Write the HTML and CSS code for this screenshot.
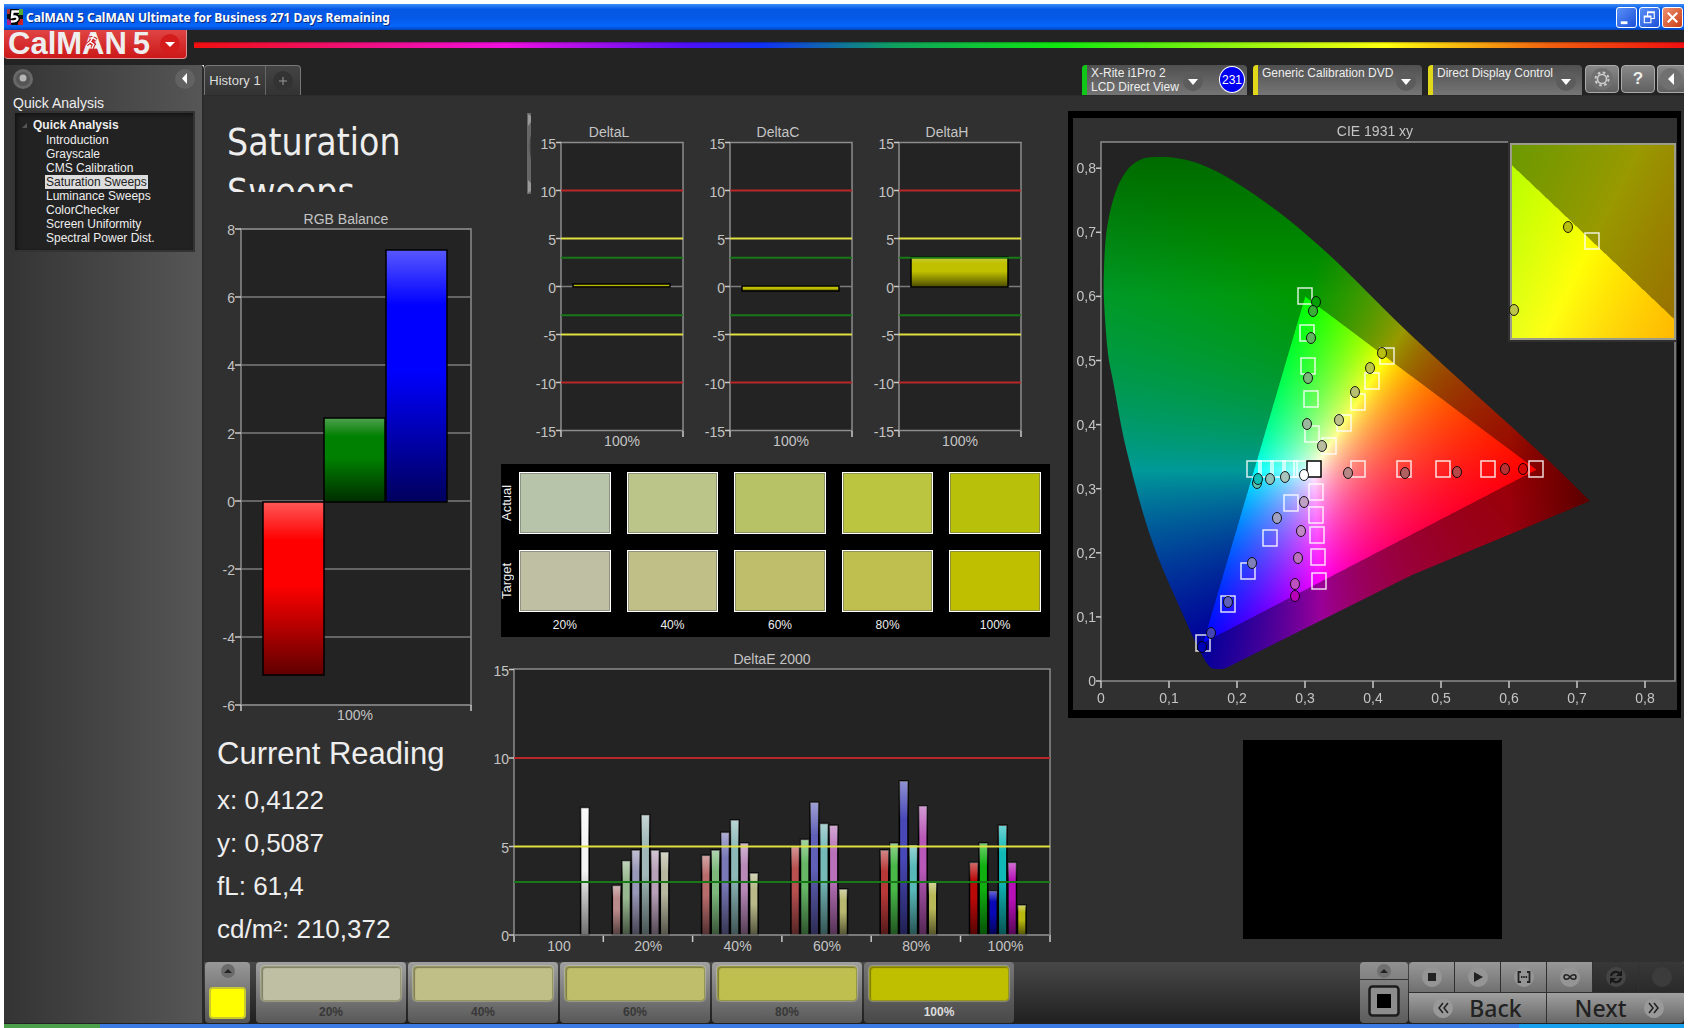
FILE: index.html
```html
<!DOCTYPE html>
<html lang="en">
<head>
<meta charset="utf-8">
<title>CalMAN 5</title>
<link rel="stylesheet" href="styles.css">
</head>
<body>
<div class="window">
  <header class="titlebar">
    <svg class="app-icon" viewBox="0 0 16 16" aria-hidden="true"><rect width="16" height="16" fill="#111"/><path d="M0 0h5v5H0z" fill="#a33"/><path d="M11 0h5v6h-5z" fill="#5a3"/><path d="M0 10h4v6H0z" fill="#a28"/><path d="M11 10h5v6h-5z" fill="#c22"/><path d="M12 2.500H5.500L5 8q5-1.500 5.500 1.500T4 12.500" fill="none" stroke="#000" stroke-width="5"/><path d="M12 2.500H5.500L5 8q5-1.500 5.500 1.500T4 12.500" fill="none" stroke="#fff" stroke-width="2.400"/></svg>
    <span class="title-text">CalMAN 5 CalMAN Ultimate for Business 271 Days Remaining</span>
    <button class="win-btn" aria-label="Minimize"><svg viewBox="0 0 20 20"><path d="M4 14h7v3H4z" fill="#fff"/></svg></button>
    <button class="win-btn" aria-label="Restore"><svg viewBox="0 0 20 20"><path d="M8 8V4h7v7h-3M8 5h7M4.500 8.500h7v7h-7zM4.500 9.500h7" fill="none" stroke="#fff" stroke-width="1.200"/></svg></button>
    <button class="win-btn close" aria-label="Close"><svg viewBox="0 0 20 20"><path d="M5 5l10 10M15 5L5 15" stroke="#fff" stroke-width="2.200"/></svg></button>
  </header>

  <div class="brandbar">
    <button class="logo"><span>CalMAN</span><span>5</span>
      <svg class="logo-arrow" viewBox="0 0 22 22" aria-hidden="true"><circle cx="11" cy="11" r="10" fill="#d41c1c"/><path d="M6 9h10l-5 5z" fill="#fff"/></svg>
      <svg class="logo-man" viewBox="0 0 14 18" aria-hidden="true"><path d="M8 5L5 10l4 3-2 4M5 10l-4 3M8 5l4 3M8 5L4 6" fill="none" stroke="#c22" stroke-width="4"/><path d="M8 5L5 10l4 3-2 4M5 10l-4 3M8 5l4 3M8 5L4 6" fill="none" stroke="#fff" stroke-width="1.500"/><circle cx="9" cy="2.500" r="1.800" fill="#fff"/></svg>
    </button>
    <div class="spectrum"></div>
  </div>

  <div class="workspace">
    <aside class="sidebar">
      <div class="side-tools">
        <button class="round" aria-label="Pin"><svg viewBox="0 0 20 20"><circle cx="10" cy="10" r="10" fill="#686868"/><circle cx="10" cy="10" r="7" fill="#555"/><circle cx="10" cy="9" r="3.500" fill="#b5b5b5"/></svg></button>
        <button class="round" aria-label="Collapse"><svg viewBox="0 0 20 20"><circle cx="10" cy="10" r="10" fill="#626262"/><path d="M12 4v11L7 9.500z" fill="#fff"/></svg></button>
      </div>
      <h2 class="side-title">Quick Analysis</h2>
      <nav class="tree">
        <div class="tree-root"><svg viewBox="0 0 6 6" aria-hidden="true"><path d="M6 0v6H0z" fill="#555"/></svg>Quick Analysis</div>
        <a href="#intro">Introduction</a>
        <a href="#gray">Grayscale</a>
        <a href="#cms">CMS Calibration</a>
        <a href="#sat" class="current">Saturation Sweeps</a>
        <a href="#lum">Luminance Sweeps</a>
        <a href="#checker">ColorChecker</a>
        <a href="#uniformity">Screen Uniformity</a>
        <a href="#spectral">Spectral Power Dist.</a>
      </nav>
    </aside>

    <div class="main">
      <div class="tabs">
        <div class="history"><button class="tab">History 1</button><button class="tab-add" aria-label="Add history"><svg viewBox="0 0 20 20"><circle cx="10" cy="10" r="10" fill="#333"/><path d="M6 10h8M10 6v8" stroke="#999"/></svg></button></div>
        <div class="devices">
          <div class="device wide"><i class="led green"></i><span>X-Rite i1Pro 2<br>LCD Direct View</span><button class="drop" aria-label="Meter menu"><svg viewBox="0 0 20 20"><circle cx="10" cy="10" r="10" fill="#5c5c5c"/><path d="M5 8h10l-5 6z" fill="#fff"/></svg></button><button class="count">231</button></div>
          <div class="device source"><i class="led"></i><span>Generic Calibration DVD</span><button class="drop" aria-label="Source menu"><svg viewBox="0 0 20 20"><circle cx="10" cy="10" r="10" fill="#5c5c5c"/><path d="M5 8h10l-5 6z" fill="#fff"/></svg></button></div>
          <div class="device display"><i class="led"></i><span>Direct Display Control</span><button class="drop" aria-label="Display menu"><svg viewBox="0 0 20 20"><circle cx="10" cy="10" r="10" fill="#5c5c5c"/><path d="M5 8h10l-5 6z" fill="#fff"/></svg></button></div>
          <button class="tool" aria-label="Settings"><svg viewBox="0 0 24 24"><circle cx="12" cy="12" r="11" fill="#707070"/><circle cx="12" cy="12" r="4.500" fill="none" stroke="#ccc" stroke-width="1.600"/><circle cx="12" cy="12" r="6.500" fill="none" stroke="#ccc" stroke-width="2" stroke-dasharray="2.600 2.500"/></svg></button>
          <button class="tool help">?</button>
          <button class="tool last" aria-label="Collapse"><svg viewBox="0 0 24 24"><circle cx="12" cy="12" r="11" fill="#707070"/><path d="M15 6v12l-6-6z" fill="#fff"/></svg></button>
        </div>
      </div>

      <main class="content">
        <section class="col-left">
          <h1>Saturation Sweeps</h1>
          <svg id="rgb" class="chart" viewBox="204 200 290 520" role="img" aria-label="RGB Balance"></svg>
          <div class="reading">
            <h2>Current Reading</h2>
            <p>x: 0,4122</p><p>y: 0,5087</p><p>fL: 61,4</p><p>cd/m²: 210,372</p>
          </div>
        </section>
        <section class="col-mid">
          <svg id="delta" class="chart" viewBox="494 100 573 356" role="img" aria-label="DeltaL, DeltaC and DeltaH"></svg>
          <div class="patches">
            <b class="side">Actual</b><i class="a20"></i><i class="a40"></i><i class="a60"></i><i class="a80"></i><i class="a100"></i>
            <b class="side">Target</b><i class="t20"></i><i class="t40"></i><i class="t60"></i><i class="t80"></i><i class="t100"></i>
            <span></span><span>20%</span><span>40%</span><span>60%</span><span>80%</span><span>100%</span>
          </div>
          <svg id="de" class="chart" viewBox="494 645 573 312" role="img" aria-label="DeltaE 2000"></svg>
        </section>
        <section class="col-right">
          <div class="cie"><canvas id="gamut" width="1208" height="1184"></canvas><svg id="cie" class="chart" viewBox="1073 117 604 592" role="img" aria-label="CIE 1931 xy"></svg></div>
          <div class="preview"></div>
        </section>
      </main>

      <footer class="dock">
        <div class="picker"><svg viewBox="0 0 14 14" aria-hidden="true"><circle cx="7" cy="7" r="7" fill="#6a6a6a"/><path d="M3 9h8L7 5z" fill="#222"/></svg><button class="swatch" aria-label="Current color"></button></div>
        <button class="level"><i class="t20"></i>20%</button>
        <button class="level"><i class="t40"></i>40%</button>
        <button class="level"><i class="t60"></i>60%</button>
        <button class="level"><i class="t80"></i>80%</button>
        <button class="level active"><i class="t100"></i>100%</button>
        <div class="controls">
          <div class="screen"><button aria-label="Open pattern window"><svg viewBox="0 0 14 14"><circle cx="7" cy="7" r="7" fill="#6f6f6f"/><path d="M3 9h8L7 5z" fill="#222"/></svg></button><button class="pattern" aria-label="Pattern"><svg viewBox="0 0 32 32"><rect x="1.500" y="1.500" width="29" height="29" rx="3" fill="#8d8d8d" stroke="#1c1c1c" stroke-width="2.500"/><path d="M9 9h14v14H9z" fill="#000"/></svg></button></div>
          <div class="keys">
            <button aria-label="Stop"><svg viewBox="0 0 20 20"><circle cx="10" cy="10" r="10" fill="#959595"/><path d="M6 6h8v8H6z" fill="#222"/></svg></button>
            <button aria-label="Read"><svg viewBox="0 0 20 20"><circle cx="10" cy="10" r="10" fill="#959595"/><path d="M6 5l9 5-9 5z" fill="#222"/></svg></button>
            <button aria-label="Read series"><svg viewBox="0 0 20 20"><circle cx="10" cy="10" r="10" fill="#959595"/><path d="M7 5H4.500v10H7M13 5h2.500v10H13M7 10h1.500M9.300 10h1.500M11.600 10h1.500" fill="none" stroke="#222" stroke-width="1.800"/></svg></button>
            <button aria-label="Read continuous"><svg viewBox="0 0 20 20"><circle cx="10" cy="10" r="10" fill="#959595"/><path d="M10 10c-2-3-6-3-6 0s4 3 6 0 6-3 6 0-4 3-6 0z" fill="none" stroke="#222" stroke-width="1.500"/></svg></button>
            <button class="off" aria-label="Refresh"><svg viewBox="0 0 20 20"><circle cx="10" cy="10" r="10" fill="#444"/><path d="M5 9a5 5 0 0 1 9-2M15 11a5 5 0 0 1-9 2" fill="none" stroke="#171717" stroke-width="2"/><path d="M16 3v6h-6zM4 17v-6h6z" fill="#171717"/></svg></button>
            <button class="off" aria-label="Record"><svg viewBox="0 0 20 20"><circle cx="10" cy="10" r="10" fill="#3c3c3c"/></svg></button>
            <button class="nav"><svg viewBox="0 0 20 20"><circle cx="10" cy="10" r="10" fill="#999"/><path d="M10 5l-4 5 4 5M15 5l-4 5 4 5" fill="none" stroke="#222" stroke-width="1.500"/></svg>Back</button>
            <button class="nav next">Next<svg viewBox="0 0 20 20"><circle cx="10" cy="10" r="10" fill="#999"/><path d="M5 5l4 5-4 5M10 5l4 5-4 5" fill="none" stroke="#222" stroke-width="1.500"/></svg></button>
          </div>
        </div>
      </footer>
    </div>
  </div>
  <div class="taskbar"><i class="start"></i><i class="tray"></i></div>
</div>
<script src="charts.js"></script>
</body>
</html>
```
FILE: charts.js
```js
const rect = (x, y, w, h, cls, extra = '') => `<rect x="${x}" y="${y}" width="${w}" height="${h}" class="${cls}" ${extra}/>`;
const line = (x1, y1, x2, y2, cls) => `<path d="M${x1} ${y1}L${x2} ${y2}" class="${cls}"/>`;
const text = (x, y, s, anchor = 'middle') => `<text x="${x}" y="${y}" text-anchor="${anchor}">${s}</text>`;
const put = (id, html) => { document.getElementById(id).innerHTML = html; };

/* vertical bar shading: light on top, full colour, dark at the foot */
const shade = (id, top, mid, low) => `<linearGradient id="${id}" x1="0" y1="0" x2="0" y2="1"><stop offset="0" stop-color="${top}"/><stop offset=".22" stop-color="${mid}"/><stop offset=".48" stop-color="${mid}"/><stop offset="1" stop-color="${low}"/></linearGradient>`;

/* RGB balance */
{
  const X = 241, R = 471, y = v => 501 - v * 34;
  let s = '<defs>' + shade('r', '#ff5858', '#f00', '#600000') + shade('g', '#4fa04f', '#008000', '#002c00') + shade('b', '#5858ff', '#00f', '#00005c') + '</defs>';
  s += rect(X, y(8), R - X, y(-6) - y(8), 'plot');
  for (let v = 8; v >= -6; v -= 2) s += line(X, y(v), R, y(v), 'grid') + line(X - 6, y(v), X, y(v), 'tick') + text(235, y(v) + 6, v, 'end');
  s += rect(263, 502, 61, 173, 'bar', 'fill="url(#r)"') + rect(324, 418, 61, 84, 'bar', 'fill="url(#g)"') + rect(386, 250, 61, 252, 'bar', 'fill="url(#b)"');
  s += line(X, 705, X, 711, 'tick') + line(R, 705, R, 711, 'tick') + text(346, 224, 'RGB Balance') + text(355, 720, '100%');
  put('rgb', s);
}

/* DeltaL, DeltaC, DeltaH */
{
  const y = v => 286.5 - v * 9.6;
  let s = '<defs>' + shade('y', '#c8cc40', '#c0c000', '#4c4c00') + '</defs>';
  s += '<path d="M527 113h4v81h-4z" fill="#666"/><path d="M528 114l3 2v6l-3 4zM528 180l3 3v8l-3 2z" fill="#999"/><path d="M531 134q-3 12 0 26z" fill="#444"/>';
  [['DeltaL', 284, 3], ['DeltaC', 286, 5], ['DeltaH', 257, 30]].forEach(([name, top, h], i) => {
    const X = 561 + 169 * i, R = X + 122;
    s += rect(X, 142.5, 122, 288, 'plot') + line(X, 286.5, R, 286.5, 'grid');
    for (let v = 15; v >= -15; v -= 5) s += line(X - 5, y(v), X, y(v), 'tick') + text(X - 5, y(v) + 6, v, 'end');
    s += rect(X + 12, top, 97, h, 'bar', 'fill="url(#y)"');
    for (const k of [1, -1]) s += line(X, y(10 * k), R, y(10 * k), 'lim red') + line(X, y(5 * k), R, y(5 * k), 'lim yellow') + line(X, y(3 * k), R, y(3 * k), 'lim green');
    s += line(X, 431, X, 437, 'tick') + line(R, 431, R, 437, 'tick') + text(X + 48, 137, name) + text(X + 61, 446, '100%');
  });
  put('delta', s);
}

/* DeltaE 2000 */
{
  const X = 514, R = 1050, y = v => 935 - v * 17.7;
  const sets = [
    ['100', [0, 0, 0, 0, 0, 0, 7.2], ['', '', '', '', '', '', 'f4f4f4']],
    ['20%', [2.8, 4.2, 4.8, 6.8, 4.8, 4.7], ['b88a8a', '98b890', '9898b8', 'a0b8b8', 'b8a0b8', 'b8b8a0']],
    ['40%', [4.5, 4.8, 5.8, 6.5, 5.2, 3.5], ['b86c6c', '7cb87c', '7878b8', '8cb8b8', 'b888b8', 'b8b888']],
    ['60%', [5, 5.4, 7.5, 6.3, 6.2, 2.6], ['b85050', '66b866', '6060b8', '74b8b8', 'b870b8', 'b8b870']],
    ['80%', [4.8, 5.2, 8.7, 5.1, 7.3, 3], ['b83838', '48b848', '4848b8', '58b8b8', 'b858b8', 'b8b858']],
    ['100%', [4.1, 5.2, 2.5, 6.2, 4.1, 1.7], ['b80808', '10b010', '0808b8', '10b8b8', 'b810b8', 'b8b810']],
  ];
  let s = '<defs><linearGradient id="gloss" x1="0" y1="0" x2="0" y2="1"><stop offset="0" stop-color="#fff" stop-opacity=".4"/><stop offset=".25" stop-color="#fff" stop-opacity="0"/><stop offset=".5" stop-color="#000" stop-opacity="0"/><stop offset="1" stop-color="#000" stop-opacity=".55"/></linearGradient></defs>';
  s += rect(X, 669, R - X, 266, 'plot');
  sets.forEach(([name, vals, cols], i) => {
    const g = X + i * 89.3;
    vals.forEach((v, k) => {
      if (!v) return;
      const x = g + 9 + k * 9.6;
      s += rect(x, y(v), 8.6, 935 - y(v), 'bar', `fill="#${cols[k]}"`) + rect(x, y(v), 8.6, 935 - y(v), '', 'fill="url(#gloss)"');
    });
    s += line(g, 935, g, 942, 'tick') + text(g + 45, 951, name);
  });
  s += line(R, 935, R, 942, 'tick') + line(X, 935, R, 935, 'grid');
  for (const v of [0, 5, 10, 15]) s += line(X - 5, y(v), X, y(v), 'tick') + text(X - 5, y(v) + 6, v, 'end');
  s += line(X, y(10), R, y(10), 'lim red') + line(X, y(5), R, y(5), 'lim yellow') + line(X, y(3), R, y(3), 'lim green') + text(772, 664, 'DeltaE 2000');
  put('de', s);
}

/* CIE 1931 xy: axes, targets (squares) and readings (dots) */
{
  const X = 1101, B = 680, px = v => X + v * 680, py = v => B - v * 641;
  let s = '<path d="M1508 141H1101V680H1675V341" class="frame"/>';
  for (let i = 0; i <= 8; i++) {
    const n = i ? '0,' + i : '0';
    s += line(px(i / 10), B, px(i / 10), B + 7, 'tick') + text(px(i / 10), 702, n);
    s += line(X - 5, py(i / 10), X, py(i / 10), 'tick') + text(X - 5, py(i / 10) + 5, n, 'end');
  }
  s += text(1375, 135, 'CIE 1931 xy') + '<rect x="1511" y="143" width="164" height="195" class="inset"/>';
  const sq = (x, y, c = 'target') => rect(x - 7, y - 8, 14, 16, c);
  const dot = (x, y, c) => `<ellipse cx="${x}" cy="${y}" rx="4.500" ry="5.500" fill="${c}" class="dot"/>`;
  [[1305, 295], [1307, 332], [1308, 365], [1311, 398], [1312, 433], [1387, 355], [1372, 380], [1358, 401], [1344, 422], [1329, 445],
   [1254, 468], [1266, 468], [1278, 468], [1290, 468], [1301, 468], [1358, 468], [1404, 468], [1443, 468], [1488, 468], [1536, 468],
   [1316, 491], [1316, 514], [1317, 534], [1318, 556], [1319, 580], [1291, 502], [1270, 537], [1248, 570], [1228, 603], [1203, 642], [1592, 240]]
    .forEach(p => { s += sq(...p); });
  s += sq(1314, 468, 'target white');
  [[1316, 301, '#00a000'], [1313, 310, '#38b038'], [1311, 337, '#60b460'], [1308, 377, '#7cb87c'], [1307, 423, '#9cb89c'],
   [1382, 352, '#b8bf10'], [1370, 367, '#bdc44a'], [1355, 391, '#b8bf70'], [1339, 419, '#bcc088'], [1322, 445, '#b8bda0'],
   [1304, 474, '#fff'], [1285, 476, '#a8c4bc'], [1270, 478, '#90c0bc'], [1257, 482, '#60c0b0'], [1258, 478, '#10c0b8'],
   [1348, 472, '#b88888'], [1405, 472, '#b06060'], [1457, 471, '#b84848'], [1505, 468, '#b83030'], [1523, 468, '#d80808'],
   [1304, 501, '#c0a0c4'], [1301, 530, '#c088c4'], [1298, 557, '#bc70bc'], [1295, 583, '#c050c0'], [1295, 595, '#b800b8'],
   [1277, 517, '#a0a0c0'], [1252, 562, '#8080b8'], [1228, 601, '#6060b8'], [1211, 632, '#4444b4'], [1202, 646, '#0000b4'],
   [1568, 226, '#b8bf10'], [1514, 309, '#bdc44a']].forEach(p => { s += dot(...p); });
  put('cie', s);
}

/* chromaticity colours inside the spectral locus; outside the display triangle they are dimmed */
{
  const OX = 1073, OY = 117, K = 2;
  const ctx = document.getElementById('gamut').getContext('2d');
  const inside = (x, y) => {
    const side = (ax, ay, bx, by) => (bx - ax) * (y - ay) - (by - ay) * (x - ax);
    const a = side(.15, .06, .64, .33), b = side(.64, .33, .3, .6), c = side(.3, .6, .15, .06);
    return a >= 0 && b >= 0 && c >= 0;
  };
  const colour = (x, y) => {
    const z = 1 - x - y;
    const rgb = [3.2406 * x - 1.5372 * y - .4986 * z, -.9689 * x + 1.8758 * y + .0415 * z, .0557 * x - .204 * y + 1.057 * z].map(v => Math.max(0, v));
    const m = Math.max(...rgb) || 1;
    const f = inside(x, y) ? 1 : .6 * Math.max(0, 1 - 1.4 * Math.max(0, y - .6) - 3.5 * Math.max(0, x - .6));
    return rgb.map(v => 255 * f * v / m);
  };
  const layer = (x0, y0, w, h, toX, toY) => {
    const c = document.createElement('canvas');
    c.width = w * K; c.height = h * K;
    const g = c.getContext('2d'), img = g.createImageData(c.width, c.height);
    for (let j = 0, n = 0; j < c.height; j++) for (let i = 0; i < c.width; i++, n += 4) {
      const rgb = colour(toX(x0 + i / K), toY(y0 + j / K));
      img.data[n] = rgb[0]; img.data[n + 1] = rgb[1]; img.data[n + 2] = rgb[2]; img.data[n + 3] = 255;
    }
    g.putImageData(img, 0, 0);
    return c;
  };
  ctx.scale(K, K);
  ctx.translate(-OX, -OY);
  ctx.fillStyle = '#232323';
  ctx.fillRect(1101, 141, 574, 539);

  const locus = [[1590, 500], [1412, 574], [1226, 667], [1218, 668], [1210, 666], [1200, 650], [1188, 625], [1152, 540], [1126, 447], [1113, 380], [1108, 353], [1104, 300], [1104, 267], [1107, 227], [1116, 190], [1128, 168], [1142, 158], [1156, 156], [1176, 157], [1200, 163], [1232, 179], [1280, 212], [1316, 242], [1340, 264], [1412, 335], [1549, 460], [1590, 500]];
  ctx.save();
  ctx.beginPath();
  ctx.moveTo(...locus[0]);
  for (let i = 0; i < locus.length - 1; i++) {
    const p0 = locus[Math.max(0, i - 1)], p1 = locus[i], p2 = locus[i + 1], p3 = locus[Math.min(locus.length - 1, i + 2)];
    if (i < 2) { ctx.lineTo(...p2); continue; }
    const d = Math.hypot(p2[0] - p1[0], p2[1] - p1[1]) / 3;
    const t = (a, b) => { const l = Math.hypot(b[0] - a[0], b[1] - a[1]); return [(b[0] - a[0]) / l * d, (b[1] - a[1]) / l * d]; };
    const u = t(p0, p2), w = t(p1, p3);
    ctx.bezierCurveTo(p1[0] + u[0], p1[1] + u[1], p2[0] - w[0], p2[1] - w[1], p2[0], p2[1]);
  }
  ctx.clip();
  ctx.drawImage(layer(1101, 141, 574, 539, p => (p - 1101) / 680, p => (680 - p) / 641), 1101, 141, 574, 539);
  ctx.restore();
  ctx.fillStyle = '#303030';
  ctx.fillRect(1508, 140, 169, 201);
  ctx.drawImage(layer(1511, 143, 164, 195, p => .4193 + (p - 1592) / 3400, p => .5053 - (p - 240) / 4060), 1511, 143, 164, 195);
}
```
FILE: styles.css
```css
* { box-sizing: border-box; }
body { margin: 0; background: #fff; color: #eee; font-family: "Liberation Sans", Arial, sans-serif; font-size: 12px; }
button { font: inherit; color: inherit; border: 0; padding: 0; margin: 0; background: none; }
h1, h2, p { margin: 0; font-weight: 400; }
svg { display: block; }
.window { display: flex; flex-direction: column; min-height: 100vh; padding: 4px 4px 0; }

.titlebar { display: flex; align-items: center; gap: 2px; height: 26px; padding: 0 1px 0 3px; background: linear-gradient(#3c8cf8, #0458e4 20%, #0458e4 50%, #0566fc 85%, #0342b8); }
.app-icon { width: 16px; height: 16px; margin-right: 1px; }
.title-text { flex: 1; font: bold 12px "Noto Sans", sans-serif; color: #fff; text-shadow: 1px 1px #0a2a80; white-space: nowrap; }
.win-btn { width: 21px; height: 21px; border: 1px solid #fff; border-radius: 3px; background: linear-gradient(135deg, #5a90f8, #1c4fd8); }
.win-btn.close { background: linear-gradient(135deg, #f09070, #c83c14); }

.brandbar { display: flex; gap: 7px; height: 35px; background: #232323; }
.logo { position: relative; display: flex; align-items: center; gap: 6px; flex: none; width: 183px; height: 29px; padding-left: 4px; overflow: hidden; font-size: 31px; font-weight: 700; line-height: 24px; background: linear-gradient(#e04444, #cc1818); border: solid #d89090; border-width: 0 1px 1px 0; border-radius: 0 0 4px 4px; }
.logo-arrow { width: 22px; height: 22px; margin: 0 5px 0 auto; }
.logo-man { position: absolute; left: 81px; top: 3px; width: 14px; height: 16px; }
.spectrum { flex: 1; height: 6px; margin-top: 12px; background: linear-gradient(rgba(0,0,0,.35), transparent 30%), linear-gradient(90deg, #f01010, #f010e0 21%, #5010f8 33%, #1030f8 38%, #10a060 47%, #10e810 58%, #ffff10 80%, #f06010 91%, #f01010); }

.workspace { display: flex; flex: 1; }
.sidebar { flex: none; width: 200px; padding: 4px 7px 4px 9px; border-right: 2px solid #2a2a2a; border-radius: 0 4px 0 0; background: linear-gradient(90deg, #343434, #565656); }
.side-tools { display: flex; justify-content: space-between; }
.round { width: 20px; height: 20px; }
.side-title { margin-top: 6px; font-size: 14px; line-height: 16px; }
.tree { width: 182px; height: 141px; padding: 4px 0 0 30px; border: 2px solid #333; background: #222; line-height: 14px; box-shadow: inset 2px 2px 4px #111; }
.tree-root { display: flex; align-items: center; gap: 6px; margin-left: -24px; padding-left: 1px; font-weight: 700; line-height: 16px; }
.tree-root svg { width: 5px; height: 5px; }
.tree a { display: table; padding: 0 1px; color: #eee; text-decoration: none; }
.tree .current { background: #ddd; color: #222; line-height: 14px; }

.main { display: flex; flex: 1; flex-direction: column; min-width: 0; background: #303030; }
.tabs { display: flex; justify-content: space-between; height: 31px; background: #232323; border-bottom: 1px solid #2b2b2b; }
.history { display: flex; width: 97px; border: 1px solid #777; border-bottom: 0; border-radius: 4px 4px 0 0; background: linear-gradient(#444, #333); }
.tab { flex: 1; font-size: 13px; color: #ddd; border-right: 1px solid #666; }
.tab-add { width: 34px; padding: 0 7px; }
.devices { display: flex; align-items: flex-start; }
.device { display: flex; height: 30px; margin-right: 6px; border-radius: 4px 4px 0 0; background: linear-gradient(#505050, #757575); line-height: 14px; overflow: hidden; }
.device.wide { width: 165px; }
.device.source { width: 169px; }
.device.display { width: 154px; margin-right: 1px; }
.device span { flex: 1; padding: 1px 0 0 4px; white-space: nowrap; }
.led { width: 5px; background: #e0d818; }
.led.green { background: #10c818; }
.drop { width: 20px; height: 20px; margin: 6px 6px 0 0; }
.wide .drop { margin-right: 9px; }
.count { width: 26px; height: 27px; margin: 1px 2px 0 7px; border: 1px solid #fff; border-radius: 50%; background: #0000f0; color: #fff; }
.tool { width: 34px; height: 28px; margin-left: 2px; border: 1px solid #aaa; border-radius: 4px; background: linear-gradient(#888, #606060); }
.tool svg { width: 24px; height: 24px; margin: 0 auto; }
.tool.help { font-size: 17px; font-weight: 700; }
.tool.last { width: 27px; border-right: 0; border-radius: 4px 0 0 4px; }

.content { display: grid; grid-template-columns: 290fr 573fr 617fr; flex: 1; }
.chart { width: 100%; font-size: 14px; }
.chart text { fill: #c4c4c4; }
.plot { fill: #232323; stroke: #8c8c8c; stroke-width: 1.500; }
.grid { stroke: #7c7c7c; stroke-width: 1.500; }
.tick { stroke: #c8c8c8; stroke-width: 1.500; }
.bar { stroke: #000; stroke-width: 1.500; }
.lim { stroke-width: 2; }
.red { stroke: #b82828; }
.yellow { stroke: #e0e040; }
.green { stroke: #187818; }
.frame { fill: none; stroke: #8c8c8c; stroke-width: 1.500; }
.inset { fill: none; stroke: #9c9c88; stroke-width: 2; }
.target { fill: none; stroke: #fff; stroke-opacity: .85; stroke-width: 1.500; }
.target.white { fill: #fff; stroke: #000; stroke-opacity: 1; }
.dot { stroke: #000; stroke-opacity: .85; }

h1 { height: 74px; margin: 22px 20px 8px 23px; overflow: hidden; font-family: "DejaVu Sans Condensed", "DejaVu Sans", sans-serif; font-stretch: condensed; font-size: 37px; line-height: 50px; }
.reading { padding: 12px 0 0 13px; white-space: nowrap; }
.reading h2 { font-size: 31px; line-height: 44px; margin-bottom: 3px; }
.reading p { font-size: 26px; line-height: 43px; }

.col-mid { padding-top: 4px; }
.patches { display: grid; grid-template-columns: 10px repeat(5, 1fr); grid-template-rows: 62px 62px 18px; row-gap: 16px; margin: 8px 17px 8px 7px; padding: 8px 1px 0 0; height: 173px; background: #000; }
.patches i { margin: 0 8px; border: 1px solid #fff; box-shadow: inset 0 0 0 1px rgba(100,100,100,.5); }
.patches span { margin-top: -12px; text-align: center; line-height: 18px; }
.side { justify-self: start; writing-mode: vertical-rl; transform: rotate(180deg); font-size: 13px; font-weight: 400; line-height: 12px; text-align: center; }
.a20 { background: #b7c4a9; } .a40 { background: #bbc58a; } .a60 { background: #b7c166; } .a80 { background: #bcc53f; } .a100 { background: #b9c00a; }
.t20 { background: #bfbfa4; } .t40 { background: #c0bf87; } .t60 { background: #bfbf6b; } .t80 { background: #bfbf4f; } .t100 { background: #bfbf00; }

.cie { display: grid; margin: 15px 3px 0 1px; border: solid #000; border-width: 7px 4px 8px 5px; background: #303030; }
.cie > * { grid-area: 1 / 1; width: 100%; }
.preview { width: 259px; height: 199px; margin: 22px 0 0 176px; background: #000; }

.dock { display: flex; height: 61px; background: linear-gradient(#484848, #202020); }
.picker { display: flex; flex-direction: column; align-items: center; justify-content: space-between; flex: none; width: 45px; margin: 0 6px 0 1px; padding: 2px 0 4px; border-radius: 4px; background: linear-gradient(#989898, #555); }
.picker svg { width: 14px; height: 14px; }
.swatch { width: 37px; height: 32px; border: 2px solid #c8c830; border-radius: 4px; background: #ff0; }
.level { display: flex; flex-direction: column; align-items: stretch; width: 150px; margin-right: 2px; padding: 4px 5px 0; border-radius: 4px; background: linear-gradient(#a0a0a0, #585858); color: #383838; font-weight: 700; line-height: 22px; }
.level i { height: 38px; border: 1px solid rgba(110,110,60,.5); border-radius: 4px; box-shadow: inset 1px 1px 1px rgba(0,0,0,.35), 0 0 1px 1px rgba(255,255,200,.3); }
.level.active { color: #ddd; background: linear-gradient(#777, #484848); }
.controls { display: flex; gap: 1px; margin-left: auto; }
.screen { display: flex; flex-direction: column; align-items: center; width: 48px; border-radius: 4px; background: linear-gradient(#909090, #5c5c5c); }
.screen button { display: flex; justify-content: center; width: 48px; height: 18px; padding-top: 2px; border-bottom: 1px solid #333; }
.screen button svg { width: 14px; height: 14px; }
.screen .pattern { height: 43px; padding-top: 5px; border: 0; }
.screen .pattern svg { width: 32px; height: 32px; }
.keys { display: grid; grid-template-columns: repeat(6, 45px); grid-template-rows: 30px 30px; gap: 1px; width: 275px; border-radius: 4px; overflow: hidden; background: #303030; }
.keys button { display: flex; align-items: center; justify-content: center; background: linear-gradient(#989898, #707070); }
.keys svg { width: 20px; height: 20px; }
.keys .off { background: linear-gradient(#383838, #2a2a2a); }
.keys .nav { grid-column: span 3; gap: 16px; color: #222; font: 500 23px "Noto Sans", sans-serif; background: linear-gradient(#a0a0a0, #666); }
.keys .next { gap: 18px; padding-left: 8px; }

.taskbar { display: flex; justify-content: space-between; height: 5px; border-top: 1px solid #222; background: #3c7ae4; }
.start { width: 96px; background: #4ca04c; }
.tray { width: 165px; background: #18a0ee; }
```
